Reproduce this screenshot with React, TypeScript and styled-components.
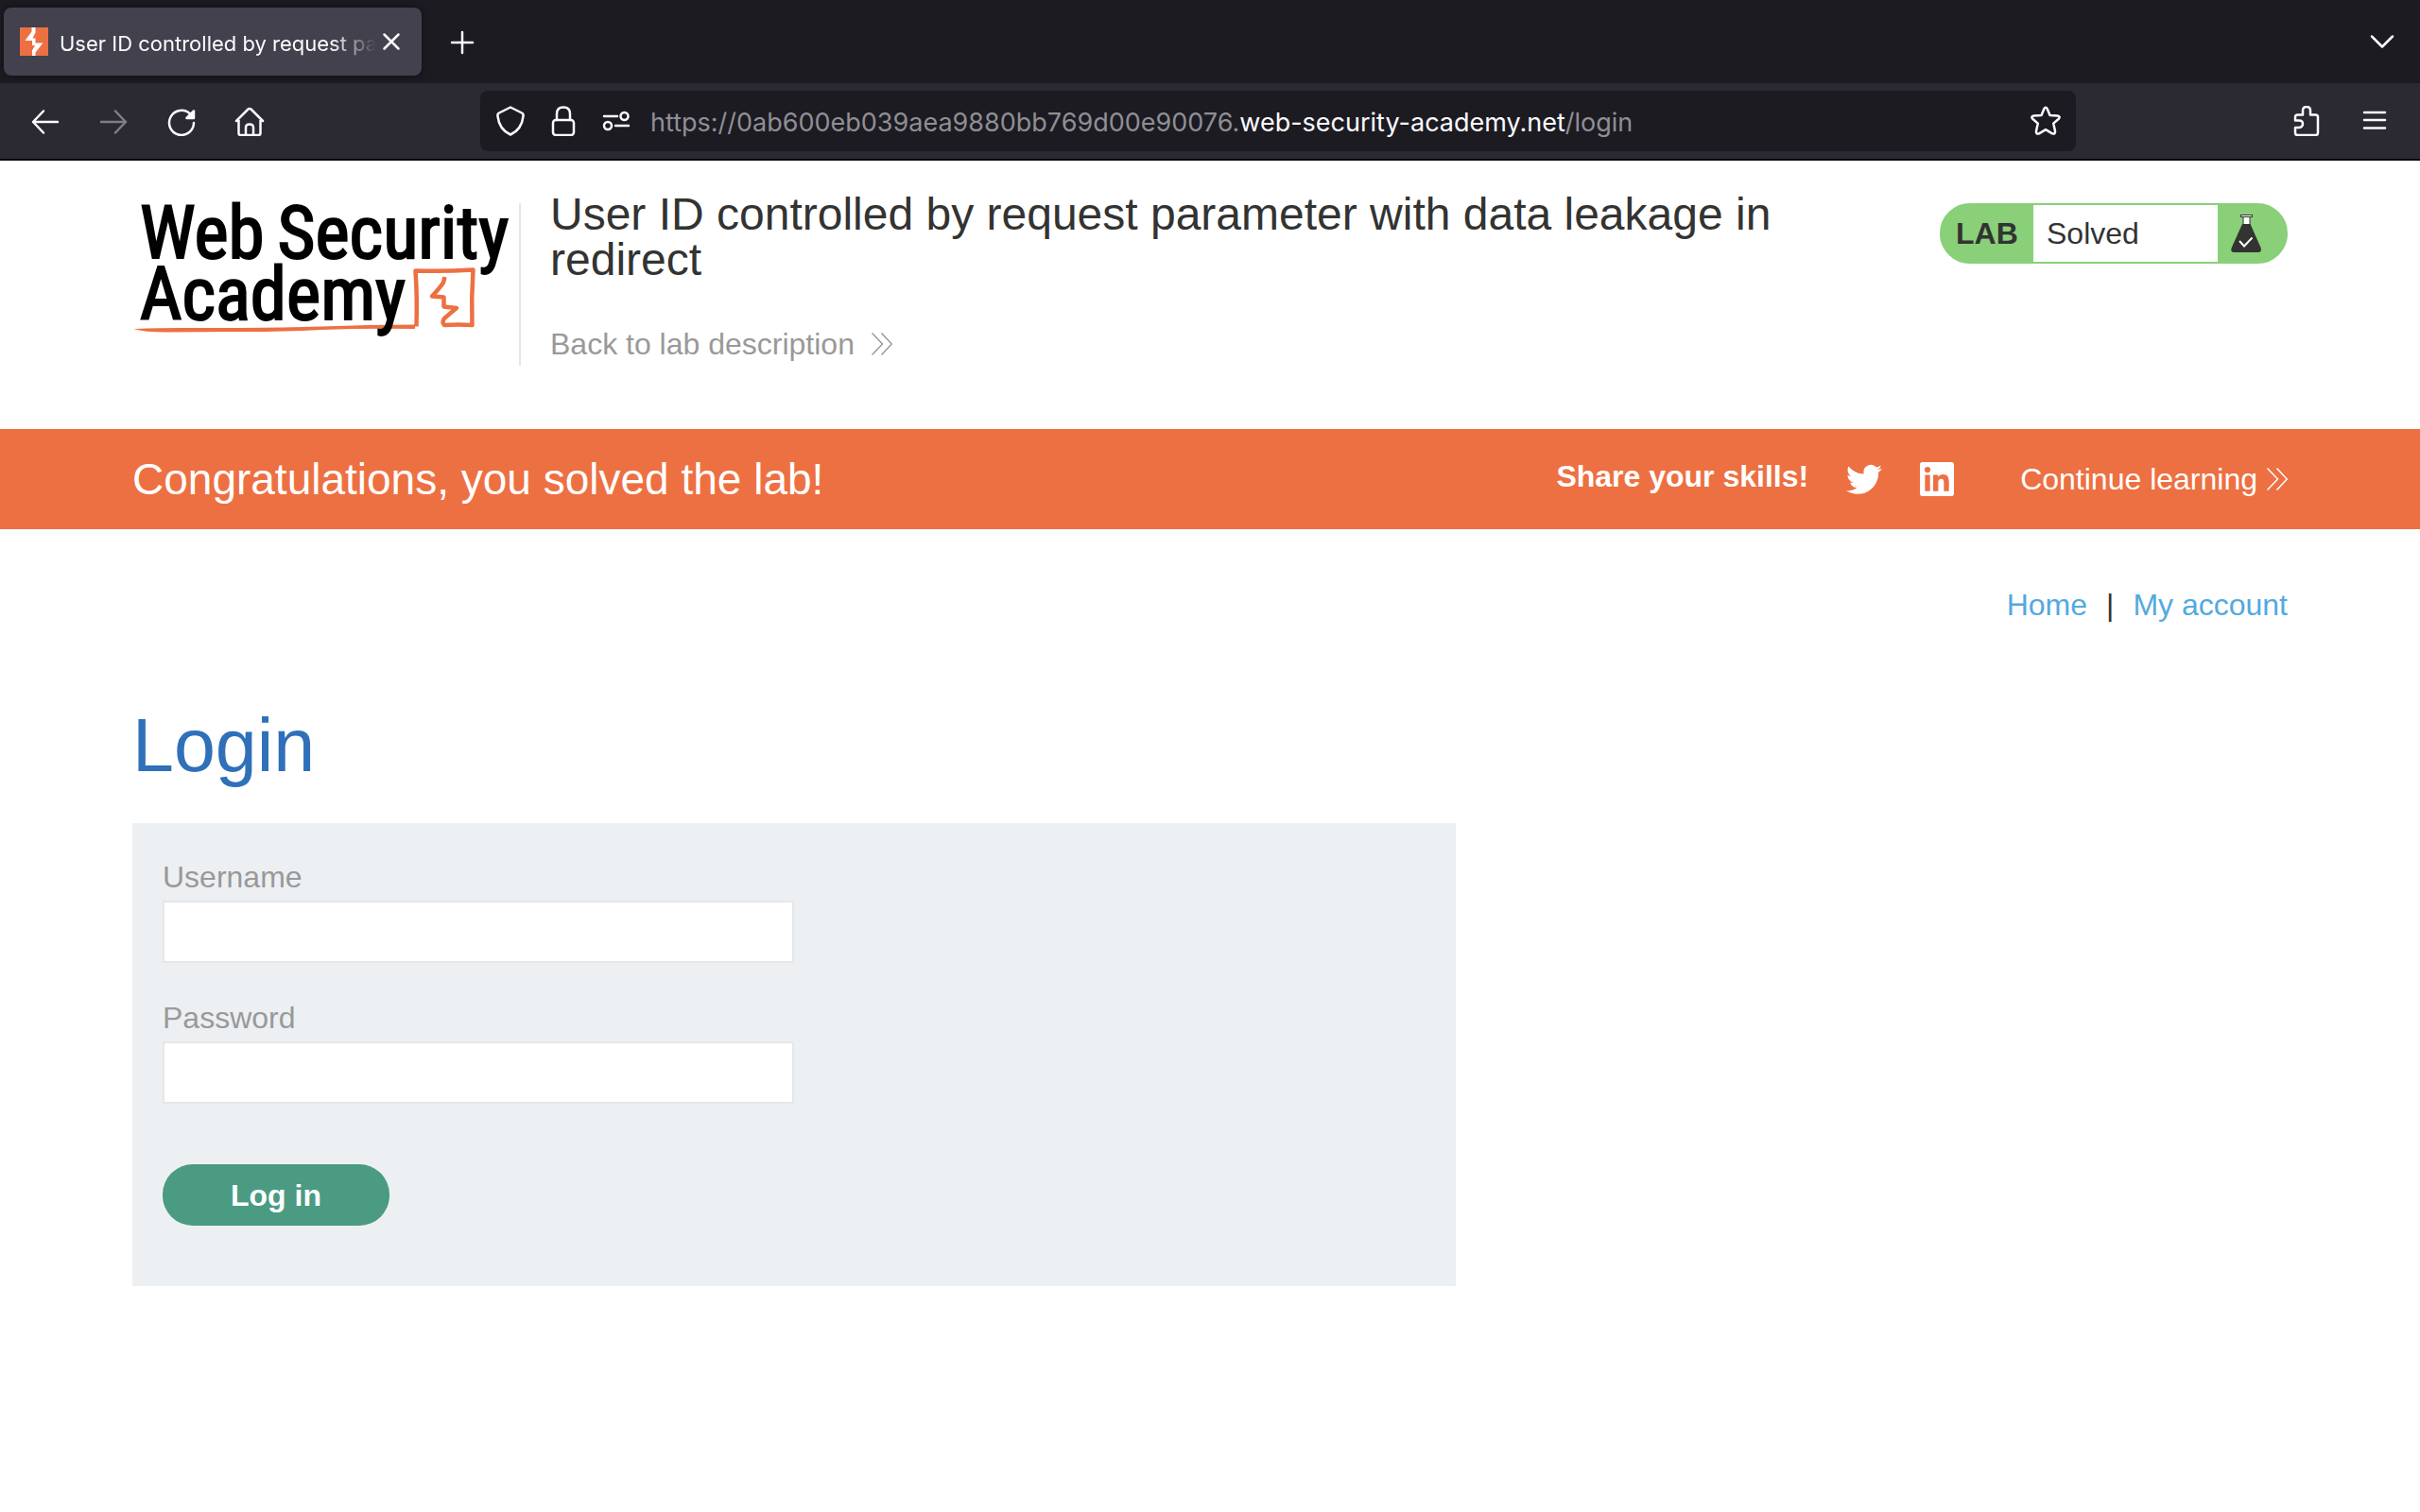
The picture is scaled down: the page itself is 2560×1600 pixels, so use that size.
import React from "react";
import styled, { createGlobalStyle } from "styled-components";

const GlobalStyle = createGlobalStyle`
  *, *::before, *::after { box-sizing: border-box; }
  body {
    margin: 0;
    background: #ffffff;
    color: #333332;
    font-family: "Liberation Sans", Arial, sans-serif;
    font-size: 32px;
    line-height: 40px;
  }
  button, input { font: inherit; }
  a { color: inherit; text-decoration: none; }
`;

/* ---------- Browser chrome ---------- */

const Chrome = styled.header`
  color: #fbfbfe;
  font-family: Inter, Roboto, sans-serif;
  border-bottom: 2px solid #0c0c0d;
`;

const TabStrip = styled.div`
  display: flex;
  align-items: center;
  height: 88px;
  padding: 0 12px 0 4px;
  background: #1c1b22;
`;

const Tab = styled.div`
  display: flex;
  align-items: center;
  width: 442px;
  height: 72px;
  padding: 0 16px;
  border-radius: 8px;
  background: #42414d;
  box-shadow: 0 0 8px rgba(0, 0, 0, 0.5);
`;

const TabTitle = styled.span`
  flex: 1;
  min-width: 0;
  margin-left: 11px;
  padding-top: 4px;
  overflow: hidden;
  white-space: nowrap;
  font-size: 22px;
  line-height: 32px;
  mask-image: linear-gradient(to left, transparent, #000 48px);
`;

const IconButton = styled.button<{ $width?: number }>`
  display: flex;
  align-items: center;
  justify-content: center;
  width: ${(p) => p.$width ?? 72}px;
  height: 64px;
  padding: 0;
  border: 0;
  background: none;
  color: inherit;
  &:disabled { opacity: 0.4; }
`;

const Spacer = styled.div`
  flex: 1;
`;

const Toolbar = styled.div`
  display: flex;
  align-items: center;
  height: 80px;
  padding: 0 12px;
  background: #2b2a33;
`;

const AddressBar = styled.div`
  display: flex;
  flex: 1;
  align-items: center;
  min-width: 0;
  height: 64px;
  margin: 0 208px;
  padding: 0 4px;
  border-radius: 8px;
  background: #1c1b22;
`;

const Address = styled.div`
  flex: 1;
  min-width: 0;
  margin-left: 8px;
  padding-top: 4px;
  overflow: hidden;
  color: #8f8f95;
  font-size: 27px;
  line-height: 40px;
  white-space: nowrap;
`;

const Domain = styled.span`
  color: #fbfbfe;
`;

const Stroke = ({ children }: { children: React.ReactNode }) => (
  <svg
    width="32"
    height="32"
    viewBox="0 0 32 32"
    fill="none"
    stroke="currentColor"
    strokeWidth="2.500"
    strokeLinecap="round"
    strokeLinejoin="round"
    aria-hidden="true"
  >
    {children}
  </svg>
);

const Favicon = () => (
  <svg width="32" height="32" viewBox="0 0 32 32" aria-hidden="true">
    <rect x="1" y="1" width="30" height="30" fill="#ed7042" />
    <path
      d="M13.500 1 H17.500 V6.500 L14.500 12.500 H17.500 V17.500 H25.500 L17.500 27.500 V31 H14 V25.500 L17 20 H14 V15 H6.500 L13.500 5.500 Z"
      fill="#ffffff"
    />
  </svg>
);

/* ---------- Page ---------- */

const Container = styled.div`
  width: calc(100% - 280px);
  max-width: 2280px;
  margin: 0 auto;
`;

const LabHeader = styled(Container)`
  display: flex;
  align-items: flex-start;
  padding: 21px 0 67px;
`;

const LogoLink = styled.a`
  display: grid;
  flex: none;
  width: 411px;
  height: 172px;
  margin-top: 24px;
  border-right: 2px solid #e6e6e6;
`;

const LogoMark = styled.svg`
  grid-area: 1 / 1;
  overflow: visible;
`;

const LogoText = styled.span`
  grid-area: 1 / 1;
  z-index: 1;
  padding-left: 8px;
  color: #000000;
  font-family: "Roboto Condensed", Roboto, sans-serif;
  font-size: 77px;
  line-height: 65px;
  white-space: nowrap;
  -webkit-text-stroke: 2px #000000;
`;

const LogoLine = styled.span`
  display: flex;
  gap: 14px;
`;

const LabInfo = styled.div`
  flex: 1;
  min-width: 0;
  margin-left: 31px;
`;

const LabTitle = styled.h2`
  max-width: 1332px;
  margin: 12px 0 0;
  font-size: 48px;
  font-weight: 400;
  line-height: 48px;
`;

const BackLink = styled.a`
  display: inline-flex;
  align-items: center;
  gap: 18px;
  margin-top: 45px;
  color: #999999;
`;

const LabStatus = styled.div`
  display: flex;
  flex: none;
  width: 368px;
  height: 64px;
  margin-top: 24px;
  border: 2px solid #89d079;
  border-radius: 32px;
  background: #89d079;
  line-height: 60px;
`;

const StatusLabel = styled.span`
  width: 97px;
  padding-left: 15px;
  font-weight: 700;
`;

const StatusValue = styled.span`
  flex: 1;
  padding-left: 14px;
  background: #ffffff;
`;

const StatusIcon = styled.span`
  display: flex;
  align-items: center;
  width: 72px;
  padding-left: 14px;
`;

const Banner = styled.section`
  background: #ed7042;
  color: #ffffff;
`;

const BannerRow = styled(Container)`
  display: flex;
  align-items: center;
  height: 106px;
`;

const BannerTitle = styled.h4`
  flex: 1;
  margin: 0;
  font-size: 46px;
  font-weight: 400;
  line-height: 56px;
`;

const Share = styled.div`
  display: flex;
  align-items: center;
  gap: 40px;
  margin-right: 70px;
  font-weight: 700;
`;

const ShareText = styled.span`
  padding-bottom: 6px;
`;

const ShareLink = styled.a`
  display: flex;
`;

const ContinueLink = styled.a`
  display: flex;
  align-items: center;
  gap: 10px;
`;

const PageNav = styled(Container).attrs({ as: "nav" })`
  display: flex;
  justify-content: flex-end;
  gap: 20px;
  padding-top: 60px;
`;

const NavLink = styled.a`
  color: #53a9e0;
`;

const Content = styled(Container).attrs({ as: "main" })``;

const PageTitle = styled.h1`
  margin: 80px 0 33px;
  color: #2f70b9;
  font-size: 79px;
  font-weight: 400;
  line-height: 98px;
`;

const LoginForm = styled.form`
  display: flex;
  flex-direction: column;
  align-items: flex-start;
  max-width: 1400px;
  padding: 37px 32px 64px;
  background: #ecf0f3;
`;

const Field = styled.div`
  display: flex;
  flex-direction: column;
  gap: 5px;
  width: 50%;
  margin-bottom: 38px;
`;

const Label = styled.label`
  color: #999999;
`;

const TextInput = styled.input`
  width: 100%;
  height: 66px;
  padding: 0 16px;
  border: 2px solid #e6e6e6;
  border-radius: 0;
  background: #ffffff;
  outline: none;
`;

const LoginButton = styled.button`
  width: 240px;
  height: 65px;
  margin-top: 26px;
  padding: 0;
  border: 0;
  border-radius: 32px;
  background: #4a9b81;
  color: #ffffff;
  font-weight: 700;
`;

const DoubleChevron = () => (
  <svg width="22" height="24" viewBox="0 0 22 24" fill="none" stroke="currentColor" strokeWidth="1.500" aria-hidden="true">
    <path d="M0.500 0.500 L11.500 12 L0.500 23.500 M10.500 0.500 L21.300 12 L10.500 23.500" />
  </svg>
);

const Flask = () => (
  <svg width="32" height="40" viewBox="0 0 32 40" aria-hidden="true">
    <rect x="13" y="1.500" width="7" height="10" fill="#fff" stroke="#333332" strokeWidth="1" />
    <rect x="10.500" y="0.500" width="12" height="2" fill="#fff" stroke="#333332" strokeWidth="1" />
    <path d="M12 10 H20.500 L31.500 35 Q33 40 29 40 H3 Q-1 40 0.800 35 Z" fill="#333332" />
    <path d="M9 28 L14 33.500 L22.500 24.500" fill="none" stroke="#fff" strokeWidth="2" />
  </svg>
);

const Twitter = () => (
  <svg width="38" height="34" viewBox="0 1.500 24 20.500" fill="#fff" aria-hidden="true">
    <path d="M23.954 4.569a10 10 0 0 1-2.825.775 4.958 4.958 0 0 0 2.163-2.723c-.951.555-2.005.959-3.127 1.184a4.920 4.920 0 0 0-8.384 4.482C7.691 8.094 4.066 6.130 1.640 3.161a4.822 4.822 0 0 0-.666 2.475c0 1.710.870 3.213 2.188 4.096a4.904 4.904 0 0 1-2.228-.616v.061a4.923 4.923 0 0 0 3.946 4.827 4.996 4.996 0 0 1-2.212.085 4.937 4.937 0 0 0 4.604 3.417 9.868 9.868 0 0 1-6.102 2.105c-.390 0-.779-.023-1.170-.067a13.995 13.995 0 0 0 7.557 2.209c9.054 0 13.999-7.496 13.999-13.986 0-.209 0-.420-.015-.630a9.936 9.936 0 0 0 2.460-2.548l-.047-.020z" />
  </svg>
);

const LinkedIn = () => (
  <svg width="36" height="36" viewBox="0 0 24 24" fill="#fff" aria-hidden="true">
    <path d="M20.447 20.452h-3.554v-5.569c0-1.328-.027-3.037-1.852-3.037-1.853 0-2.136 1.445-2.136 2.939v5.667H9.351V9h3.414v1.561h.046c.477-.900 1.637-1.850 3.370-1.850 3.601 0 4.267 2.370 4.267 5.455v6.286zM5.337 7.433a2.062 2.062 0 0 1-2.063-2.065 2.064 2.064 0 1 1 2.063 2.065zm1.782 13.019H3.555V9h3.564v11.452zM22.225 0H1.771C.792 0 0 .774 0 1.729v20.542C0 23.227.792 24 1.771 24h20.451C23.200 24 24 23.227 24 22.271V1.729C24 .774 23.200 0 22.222 0h.003z" />
  </svg>
);

const Logo = () => (
  <LogoLink href="#" aria-label="Web Security Academy">
    <LogoMark width="409" height="172" viewBox="0 0 409 172" aria-hidden="true">
      <path
        d="M1 133 Q20 131.500 80 132 Q150 132 200 130.500 Q250 128.500 299 128.500 L299 133 Q250 132 200 134 Q150 136.500 110 136 L40 136.500 Q15 137 1 133 Z"
        fill="#ed7042"
      />
      <path
        d="M300.500 130.500 Q301.500 100 299.500 71.500 Q330 72.500 360.500 70.500 Q358.500 100 359.500 129 Q345 128 330 129 Q327 126 330 122 Q338 115 343 111 L329.500 109.500 L329.500 99.500 L317 98.500 Q325 90 329 84 L330.500 78"
        fill="none"
        stroke="#ed7042"
        strokeWidth="4.500"
        strokeLinejoin="round"
      />
    </LogoMark>
    <LogoText>
      <LogoLine>
        <span>Web</span>
        <span>Security</span>
      </LogoLine>
      <LogoLine>Academy</LogoLine>
    </LogoText>
  </LogoLink>
);

export default function App() {
  return (
    <>
      <GlobalStyle />
      <Chrome>
        <TabStrip>
          <Tab>
            <Favicon />
            <TabTitle>User ID controlled by request parameter with data leakage in redirect</TabTitle>
            <IconButton $width={32} aria-label="Close tab">
              <Stroke><path d="M8.500 8.500 L23.500 23.500 M23.500 8.500 L8.500 23.500" /></Stroke>
            </IconButton>
          </Tab>
          <IconButton $width={86} aria-label="New tab">
            <Stroke><path d="M16 6 V28 M5 17 H27" /></Stroke>
          </IconButton>
          <Spacer />
          <IconButton $width={56} aria-label="List all tabs">
            <Stroke><path d="M5 10.500 L16 21.500 L27 10.500" /></Stroke>
          </IconButton>
        </TabStrip>
        <Toolbar>
          <IconButton aria-label="Back">
            <Stroke><path d="M3 17 H29 M14 5.500 L3 17 L14 28.500" /></Stroke>
          </IconButton>
          <IconButton disabled aria-label="Forward">
            <Stroke><path d="M29 17 H3 M18 5.500 L29 17 L18 28.500" /></Stroke>
          </IconButton>
          <IconButton aria-label="Reload">
            <Stroke>
              <path d="M29 18 A13 13 0 1 1 25 8.500" />
              <path d="M29 5.500 V13 H21.500 Z" fill="currentColor" />
            </Stroke>
          </IconButton>
          <IconButton aria-label="Home">
            <Stroke>
              <path d="M2 16 L14.500 3.500 Q16 2.500 17.500 3.500 L30 16 M4.500 15 V29 Q4.500 31 6.500 31 H25.500 Q27.500 31 27.500 29 V15 M12 31 V23 Q12 19.500 16 19.500 Q20 19.500 20 23 V31" />
            </Stroke>
          </IconButton>
          <AddressBar>
            <IconButton $width={56} aria-label="Tracking protection">
              <Stroke><path d="M16 1.500 L28 7.500 Q30 8.500 29.500 11 Q28 25 16 30.500 Q4 25 2.500 11 Q2 8.500 4 7.500 Z" /></Stroke>
            </IconButton>
            <IconButton $width={56} aria-label="Site security">
              <Stroke><rect x="5" y="15" width="22" height="16" rx="3" /><path d="M9 15 V8.500 Q9 1.500 16 1.500 Q23 1.500 23 8.500 V15" /></Stroke>
            </IconButton>
            <IconButton $width={56} aria-label="Site permissions">
              <Stroke><path d="M3 11 H17 M15 21 H29" /><circle cx="24.500" cy="11" r="4" /><circle cx="7" cy="21" r="4" /></Stroke>
            </IconButton>
            <Address role="textbox" aria-label="Address">
              https://0ab600eb039aea9880bb769d00e90076.<Domain>web-security-academy.net</Domain>/login
            </Address>
            <IconButton $width={56} aria-label="Bookmark">
              <Stroke><path d="M14.300 3.200 Q16 0.300 17.700 3.200 L20.500 10 L28.500 10.600 Q32 11.200 29.800 13.800 L24.200 18.600 L26 26.800 Q26.300 30.500 23 29.300 L16 25.200 L9 29.300 Q5.700 30.500 6 26.800 L7.800 18.600 L2.200 13.800 Q0 11.200 3.500 10.600 L11.500 10 Z" /></Stroke>
            </IconButton>
          </AddressBar>
          <IconButton aria-label="Extensions">
            <Stroke><path d="M4 15.500 V12 Q4 9.500 6.500 9.500 H12 V5 Q12 1 16 1 Q20 1 20 5 V9.500 H25.500 Q28 9.500 28 12 V28.500 Q28 31 25.500 31 H6.500 Q4 31 4 28.500 V23 H8 Q12 22.500 12 19 Q12 15.500 8 15.500 Z" /></Stroke>
          </IconButton>
          <IconButton aria-label="Menu">
            <Stroke><path d="M5 7 H27 M5 15 H27 M5 23.500 H27" /></Stroke>
          </IconButton>
        </Toolbar>
      </Chrome>

      <LabHeader>
        <Logo />
        <LabInfo>
          <LabTitle>User ID controlled by request parameter with data leakage in redirect</LabTitle>
          <BackLink href="#">
            Back to lab description
            <DoubleChevron />
          </BackLink>
        </LabInfo>
        <LabStatus>
          <StatusLabel>LAB</StatusLabel>
          <StatusValue>Solved</StatusValue>
          <StatusIcon><Flask /></StatusIcon>
        </LabStatus>
      </LabHeader>

      <Banner>
        <BannerRow>
          <BannerTitle>Congratulations, you solved the lab!</BannerTitle>
          <Share>
            <ShareText>Share your skills!</ShareText>
            <ShareLink href="#" aria-label="Share on Twitter"><Twitter /></ShareLink>
            <ShareLink href="#" aria-label="Share on LinkedIn"><LinkedIn /></ShareLink>
          </Share>
          <ContinueLink href="#">
            Continue learning
            <DoubleChevron />
          </ContinueLink>
        </BannerRow>
      </Banner>

      <PageNav>
        <NavLink href="#">Home</NavLink>
        <span>|</span>
        <NavLink href="#">My account</NavLink>
      </PageNav>

      <Content>
        <PageTitle>Login</PageTitle>
        <LoginForm onSubmit={(e) => e.preventDefault()}>
          <Field>
            <Label htmlFor="username">Username</Label>
            <TextInput id="username" name="username" type="text" />
          </Field>
          <Field>
            <Label htmlFor="password">Password</Label>
            <TextInput id="password" name="password" type="password" />
          </Field>
          <LoginButton type="submit">Log in</LoginButton>
        </LoginForm>
      </Content>
    </>
  );
}
